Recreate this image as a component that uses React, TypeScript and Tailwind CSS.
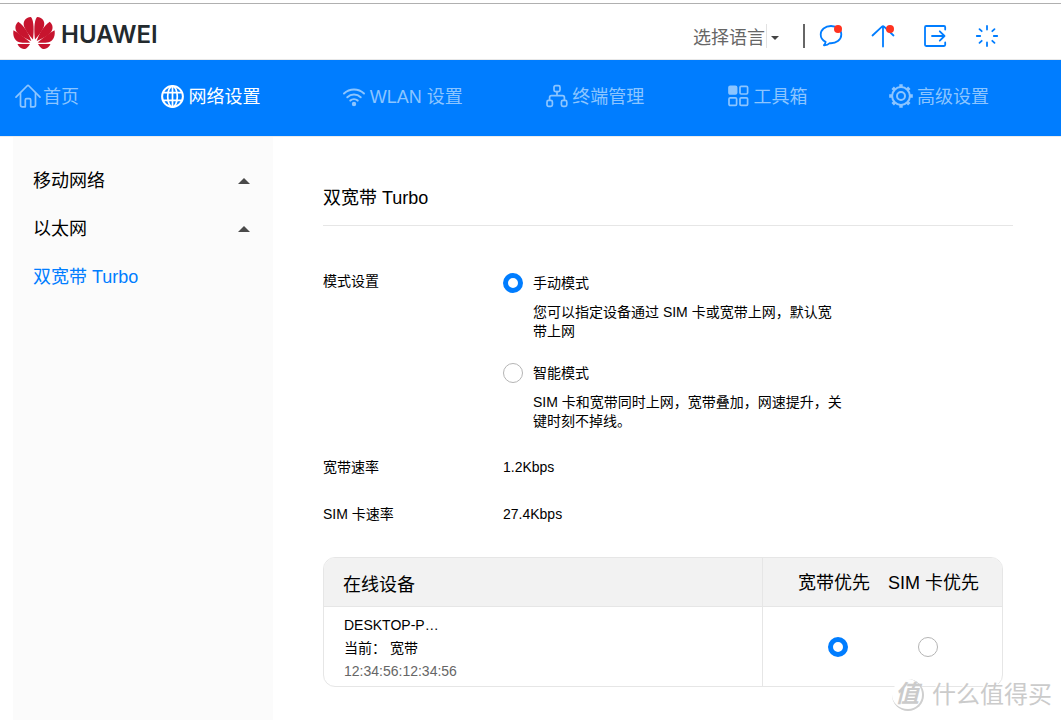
import { useState, type ReactNode } from "react";

const navItems = [
  { label: "首页", icon: <HomeIcon /> },
  { label: "网络设置", icon: <GlobeIcon />, active: true },
  { label: "WLAN 设置", icon: <WifiIcon /> },
  { label: "终端管理", icon: <DevicesIcon /> },
  { label: "工具箱", icon: <ToolboxIcon /> },
  { label: "高级设置", icon: <GearIcon /> },
];

const modes = [
  {
    id: "manual",
    label: "手动模式",
    description: "您可以指定设备通过 SIM 卡或宽带上网，默认宽带上网",
  },
  {
    id: "smart",
    label: "智能模式",
    description: "SIM 卡和宽带同时上网，宽带叠加，网速提升，关键时刻不掉线。",
  },
];

const rates = [
  { label: "宽带速率", value: "1.2Kbps" },
  { label: "SIM 卡速率", value: "27.4Kbps" },
];

const radioClass =
  "block size-5 shrink-0 appearance-none rounded-full border border-[#b5b5b5] bg-white checked:border-5 checked:border-[#007dff]";

// Left half of the flower, mirrored for the right half
const petals = (
  <>
    <path d="M20 22.500C21 14 21.200 4 18 0c-6 .5-8.500 5-6.800 9.700C13 14.500 17 19 20 22.500Z" />
    <path d="M18.300 24C15.500 16 11.500 9.500 5.300 4.800 1.500 8 1.500 12.800 5 16.300 9 20 14 22 18.300 24Z" />
    <path d="M17.300 25.600C12 21 6 16.300.500 13.300-.5 18.500 1.500 23.700 6.500 25.200c3.500.8 7.500.7 10.800.4Z" />
    <path d="M17 27H4.500c1.500 4 5.300 6 8.700 4.400C14.700 30.500 16 28.800 17 27Z" />
  </>
);

function Logo() {
  return (
    <svg className="h-8 w-[42px]" viewBox="0 0 42 32" fill="#c7142e">
      {petals}
      <g transform="translate(42 0) scale(-1 1)">{petals}</g>
    </svg>
  );
}

function NavSvg({ children }: { children: ReactNode }) {
  return (
    <svg
      className="size-[26px] shrink-0"
      viewBox="0 0 26 26"
      fill="none"
      stroke="currentColor"
      strokeWidth="1.7"
      strokeLinecap="round"
      strokeLinejoin="round"
    >
      {children}
    </svg>
  );
}

function HomeIcon() {
  return (
    <NavSvg>
      <path d="M1 13.200 12 2q1-1 2 0l11 11.200" />
      <path d="M5.500 9.500V21q0 1.800 1.800 1.800h3V16q0-1.300 1.300-1.300h2.800q1.300 0 1.300 1.300v6.800h3q1.800 0 1.800-1.800V9.500" />
    </NavSvg>
  );
}

function GlobeIcon() {
  return (
    <NavSvg>
      <circle cx="12.500" cy="12.500" r="10.400" strokeWidth="2" />
      <ellipse cx="12.500" cy="12.500" rx="4.800" ry="10.400" />
      <path d="M12.500 2.500v20M3.200 8.700h18.600M3.200 16.300h18.600" />
    </NavSvg>
  );
}

function WifiIcon() {
  return (
    <NavSvg>
      <g transform="translate(1 0)" strokeWidth="2">
        <path d="M1 9.500a14.600 14.600 0 0 1 20 0M4.300 13.200a9.800 9.800 0 0 1 13.400 0M7.300 16.600a5.400 5.400 0 0 1 7.400 0" />
        <circle cx="11" cy="20" r="2.200" fill="currentColor" stroke="none" />
      </g>
    </NavSvg>
  );
}

function DevicesIcon() {
  return (
    <NavSvg>
      <g transform="translate(2 -1)">
        <rect x="8" y="2.600" width="6" height="6" rx="1.600" />
        <rect x="1" y="17.400" width="5.400" height="6" rx="1.600" />
        <rect x="15.400" y="17.400" width="5.400" height="6" rx="1.600" />
        <path d="M11 8.600v4M3.600 17v-2.600q0-1.800 1.800-1.800h11.200q1.800 0 1.800 1.800V17" />
      </g>
    </NavSvg>
  );
}

function ToolboxIcon() {
  return (
    <NavSvg>
      <g transform="translate(1 -1)">
        <rect x="2" y="3.400" width="7.600" height="7.600" rx="1.200" fill="currentColor" />
        <rect x="13" y="3.400" width="7.600" height="7.600" rx="1.200" />
        <rect x="2" y="14.800" width="7.600" height="7.600" rx="1.200" />
        <rect x="13" y="14.800" width="7.600" height="7.600" rx="1.200" />
      </g>
    </NavSvg>
  );
}

function GearIcon() {
  return (
    <NavSvg>
      <g transform="translate(0 -1)" strokeWidth="2">
        <circle cx="12" cy="13" r="8.900" />
        <circle cx="12" cy="13" r="4" />
        <path
          strokeWidth="3.400"
          strokeLinecap="butt"
          d="M12 1.200v3M12 21.800v3M.2 13h3M20.800 13h3M3.700 4.700l2 2M18.300 19.300l2 2M20.300 4.700l-2 2M5.700 19.300l-2 2"
        />
      </g>
    </NavSvg>
  );
}

function ActionSvg({ children }: { children: ReactNode }) {
  return (
    <svg
      className="size-6"
      viewBox="0 0 24 24"
      fill="none"
      stroke="#007dff"
      strokeWidth="1.8"
      strokeLinecap="round"
      strokeLinejoin="round"
    >
      {children}
    </svg>
  );
}

function HeaderActions() {
  return (
    <div className="flex items-center gap-7">
      <button type="button" aria-label="消息">
        <ActionSvg>
          <path d="M12 2C6 2 1.700 5.800 1.700 10.600c0 3.200 1.900 5.900 4.900 7.300-.1 1.400-.7 2.600-1.700 3.400 2.300.1 4.400-.7 5.800-2.100 6.500.5 11.600-3.300 11.600-8.600C22.300 5.800 18 2 12 2Z" />
          <circle cx="19" cy="5" r="4" fill="#ff3320" stroke="none" />
        </ActionSvg>
      </button>
      <button type="button" aria-label="升级">
        <ActionSvg>
          <path d="M12 22.500V2.200M1.500 11.500 11 2.600q1-.9 2 0l9.500 8.900" />
          <circle cx="19" cy="5" r="4" fill="#ff3320" stroke="none" />
        </ActionSvg>
      </button>
      <button type="button" aria-label="退出">
        <ActionSvg>
          <path d="M22.200 5.500V3.200q0-1.200-1.200-1.200H3.200Q2 2 2 3.200v17.600Q2 22 3.200 22H21q1.200 0 1.200-1.200v-2.300M9 12h12.500M16.800 7.300l4.700 4.700-4.700 4.700" />
        </ActionSvg>
      </button>
      <button type="button" aria-label="重启">
        <ActionSvg>
          <path d="M12 2v3.500M12 18.500V22M1.800 12h3.400M18.800 12h3.400M4.500 5.200l2.200 2M17.300 16.800l2.200 2M19.500 5.200l-2.200 2M6.700 16.800l-2.200 2" />
        </ActionSvg>
      </button>
    </div>
  );
}

function Header() {
  return (
    <header className="flex h-14 items-center justify-between border-b border-[#e8e8e8] pr-[62px] pl-[13px]">
      <div className="flex items-center gap-[6px] pt-[3px]">
        <Logo />
        <span className="pt-1 font-['Inter'] text-2xl leading-7 font-semibold text-[#232a2e]">
          HUAWEI
        </span>
      </div>
      <div className="flex items-center pt-2">
        <div className="relative">
          <select
            aria-label="选择语言"
            className="block h-8 w-24 appearance-none bg-transparent pt-1 text-lg leading-7 text-[#666]"
          >
            <option>选择语言</option>
          </select>
          <span className="pointer-events-none absolute inset-y-1 right-0 flex w-[23px] items-center border-l border-[#e2e2e2] pt-1 pl-1">
            <svg className="h-1 w-2" viewBox="0 0 8 4" fill="#444">
              <path d="M0 0h8L4 4z" />
            </svg>
          </span>
        </div>
        <span className="mr-[14px] ml-[14px] h-6 w-[2px] bg-[#666]" />
        <HeaderActions />
      </div>
    </header>
  );
}

function NavBar() {
  return (
    <nav className="flex h-[76px] items-center justify-between bg-[#007dff] pr-[72px] pb-[3px] pl-[15px]">
      {navItems.map((item) => (
        <a
          key={item.label}
          href="#"
          className={`flex items-center gap-[2px] text-lg leading-7 whitespace-nowrap ${
            item.active ? "text-white" : "text-[#8cc5ff]"
          }`}
        >
          {item.icon}
          {item.label}
        </a>
      ))}
    </nav>
  );
}

function Sidebar() {
  return (
    <aside className="ml-[13px] w-[260px] shrink-0 bg-[#fbfbfb] px-5 pt-5 text-lg">
      {["移动网络", "以太网"].map((group) => (
        <button
          key={group}
          type="button"
          className="flex h-12 w-full items-center justify-between pr-[3px]"
        >
          {group}
          <svg className="h-[6px] w-3" viewBox="0 0 12 6" fill="#4a4a4a">
            <path d="M0 6h12L6 0z" />
          </svg>
        </button>
      ))}
      <a href="#" className="flex h-12 items-center text-[#007dff]">
        双宽带 Turbo
      </a>
    </aside>
  );
}

function DeviceTable() {
  const [priority, setPriority] = useState("broadband");

  return (
    <div className="mr-[10px] overflow-hidden rounded-xl border border-[#e6e6e6]">
      <table className="w-full table-fixed border-collapse text-left">
        <thead className="bg-[#f2f2f2] text-lg">
          <tr className="h-12 border-b border-[#e6e6e6]">
            <th className="pt-[6px] pl-[19px] font-normal">在线设备</th>
            <th
              id="broadband-first"
              className="w-[120px] border-l border-[#e6e6e6] pt-[2px] pr-3 text-right font-normal"
            >
              宽带优先
            </th>
            <th id="sim-first" className="w-[120px] pt-[2px] pl-[6px] font-normal whitespace-nowrap">
              SIM 卡优先
            </th>
          </tr>
        </thead>
        <tbody>
          <tr className="h-20">
            <td className="pt-1 pl-5 text-sm leading-[23px]">
              <p>DESKTOP-P…</p>
              <p>当前： 宽带</p>
              <p className="text-[#666]">12:34:56:12:34:56</p>
            </td>
            <td className="border-l border-[#e6e6e6] pt-[2px] pl-[65px]">
              <input
                type="radio"
                name="priority"
                aria-labelledby="broadband-first"
                className={radioClass}
                checked={priority === "broadband"}
                onChange={() => setPriority("broadband")}
              />
            </td>
            <td className="pt-[2px] pl-9">
              <input
                type="radio"
                name="priority"
                aria-labelledby="sim-first"
                className={radioClass}
                checked={priority === "sim"}
                onChange={() => setPriority("sim")}
              />
            </td>
          </tr>
        </tbody>
      </table>
    </div>
  );
}

function Watermark() {
  return (
    <div className="pointer-events-none absolute right-[9px] bottom-[9px] flex items-center gap-2 text-[#cbcbcb]">
      <span className="flex size-8 items-center justify-center rounded-full border-r-2 border-b-2 border-[#cfcfcf] bg-white text-2xl leading-none font-bold italic">
        值
      </span>
      <span className="text-2xl leading-8 [text-shadow:-1px_-1px_0_#fff]">什么值得买</span>
    </div>
  );
}

export default function App() {
  const [mode, setMode] = useState("manual");

  return (
    <div className="relative flex min-h-screen flex-col bg-white font-['Liberation_Sans','Noto_Sans_CJK_SC',sans-serif] text-black">
      <div className="h-1 border-b border-[#b0b0b0]" />
      <Header />
      <NavBar />
      <div className="flex flex-1 border-t border-[#ececec]">
        <Sidebar />
        <main className="mr-12 ml-[50px] flex-1 pt-[47px]">
          <h1 className="border-b border-[#e6e6e6] pb-[13px] text-lg leading-7">双宽带 Turbo</h1>

          <fieldset className="mt-[46px] flex text-sm leading-[19px]">
            <legend className="float-left w-[180px]">模式设置</legend>
            <div className="flex flex-col gap-[21px]">
              {modes.map((item) => (
                <div key={item.id}>
                  <label className="flex h-[22px] items-center gap-[10px]">
                    <input
                      type="radio"
                      name="mode"
                      className={radioClass}
                      checked={mode === item.id}
                      onChange={() => setMode(item.id)}
                    />
                    {item.label}
                  </label>
                  <p className="mt-[9px] ml-[30px] max-w-[310px]">{item.description}</p>
                </div>
              ))}
            </div>
          </fieldset>

          <dl className="mt-3 mb-5 text-sm">
            {rates.map((rate) => (
              <div key={rate.label} className="flex h-[47px] items-center">
                <dt className="w-[180px]">{rate.label}</dt>
                <dd>{rate.value}</dd>
              </div>
            ))}
          </dl>

          <DeviceTable />
        </main>
      </div>
      <Watermark />
    </div>
  );
}
